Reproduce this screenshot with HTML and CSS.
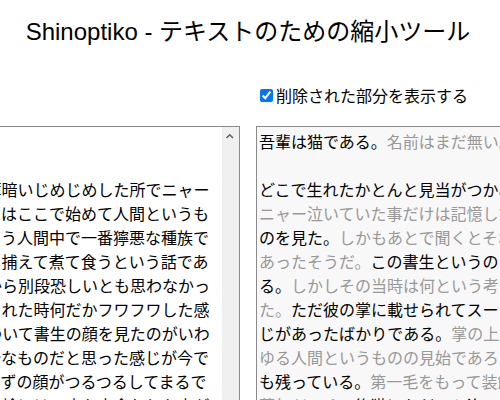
FILE: index.html
```html
<!DOCTYPE html>
<html lang="ja">
<head>
<meta charset="utf-8">
<title>Shinoptiko</title>
<link rel="stylesheet" href="styles.css">
</head>
<body>
<div class="page">
  <h1 class="title">Shinoptiko - テキストのための縮小ツール</h1>
  <div class="panes">
    <label class="toggle"><input type="checkbox" class="toggle-box" checked>削除された部分を表示する</label>
    <div class="box source-box">
      <textarea class="source">吾輩は猫である。名前はまだ無い。

どこで生れたかとんと見当がつかぬ。何でも薄暗いじめじめした所でニャーニャー泣いていた事だけは記憶している。吾輩はここで始めて人間というものを見た。しかもあとで聞くとそれは書生という人間中で一番獰悪な種族であったそうだ。この書生というのは時々我々を捕えて煮て食うという話である。しかしその当時は何という考もなかったから別段恐しいとも思わなかった。ただ彼の掌に載せられてスーと持ち上げられた時何だかフワフワした感じがあったばかりである。掌の上で少し落ちついて書生の顔を見たのがいわゆる人間というものの見始であろう。この時妙なものだと思った感じが今でも残っている。第一毛をもって装飾されべきはずの顔がつるつるしてまるで薬缶だ。その後猫にもだいぶ逢ったがこんな片輪には一度も出会わした事がない。のみならず顔の真中があまりに突起している。そうしてその穴の中から時々ぷうぷうと煙を吹く。どうも咽せぽくて実に弱った。これが人間の飲む煙草というものである事はようやくこの頃知った。</textarea>
      <div class="scrollbar"><svg class="arrow" width="17" height="17" viewBox="0 0 17 17"><polyline points="4.5,11 7.75,7.75 11,11" fill="none" stroke="#606060" stroke-width="1.5"/></svg></div>
    </div>
    <div class="box result">吾輩は猫である。<span class="cut">名前はまだ無い。</span><br><br>どこで生れたかとんと見当がつかぬ。<span class="cut">何でも薄暗いじめじめした所でニャーニャー泣いていた事だけは記憶している。</span>吾輩はここで始めて人間というものを見た。<span class="cut">しかもあとで聞くとそれは書生という人間中で一番獰悪な種族であったそうだ。</span>この書生というのは時々我々を捕えて煮て食うという話である。<span class="cut">しかしその当時は何という考もなかったから別段恐しいとも思わなかった。</span>ただ彼の掌に載せられてスーと持ち上げられた時何だかフワフワした感じがあったばかりである。<span class="cut">掌の上で少し落ちついて書生の顔を見たのがいわゆる人間というものの見始であろう。</span>この時妙なものだと思った感じが今でも残っている。<span class="cut">第一毛をもって装飾されべきはずの顔がつるつるしてまるで薬缶だ。</span>その後猫にもだいぶ逢ったがこんな片輪には一度も出会わした事がない。<span class="cut">のみならず顔の真中があまりに突起している。</span>そうしてその穴の中から時々ぷうぷうと煙を吹く。<span class="cut">どうも咽せぽくて実に弱った。</span>これが人間の飲む煙草というものである事はようやくこの頃知った。</div>
  </div>
</div>
</body>
</html>
```
FILE: styles.css
```css
html, body {
  margin: 0;
  overflow: hidden;
  background: #fff;
}
body {
  font-family: "Liberation Sans", "Noto Sans CJK JP", sans-serif;
  color: #000;
}
.page {
  padding-right: 4px;
}
.title {
  margin: 18px 0 37px;
  font-size: 24px;
  line-height: 28px;
  font-weight: normal;
  text-align: center;
}
.panes {
  display: grid;
  grid-template-columns: 577px 577px;
  grid-template-rows: 24px auto;
  column-gap: 16px;
  row-gap: 19px;
  justify-content: center;
}
.toggle {
  grid-column: 2;
  grid-row: 1;
  display: flex;
  align-items: center;
  font-family: "Noto Sans CJK JP", sans-serif;
  font-size: 16px;
  line-height: 24px;
}
.toggle-box {
  width: 13px;
  height: 13px;
  margin: 3px 3px 3px 4px;
}
.box {
  box-sizing: border-box;
  height: 300px;
  border: 1px solid #8a8a8a;
  grid-row: 2;
  font-family: "Noto Sans CJK JP", sans-serif;
  font-size: 16px;
  line-height: 24px;
}
.source-box {
  grid-column: 1;
  display: flex;
}
.source {
  flex: 1 1 0;
  min-width: 0;
  margin: 0;
  padding: 2px;
  border: 0;
  outline: none;
  resize: none;
  overflow: hidden;
  background: #fff;
  color: #000;
  font: inherit;
}
.scrollbar {
  flex: none;
  width: 17px;
  background: #f0f0f0;
}
.arrow {
  display: block;
}
.result {
  grid-column: 2;
  padding: 2px 19px 2px 2px;
  background: #f8f8f8;
  overflow: hidden;
  overflow-wrap: break-word;
}
.cut {
  color: #999;
}
```
